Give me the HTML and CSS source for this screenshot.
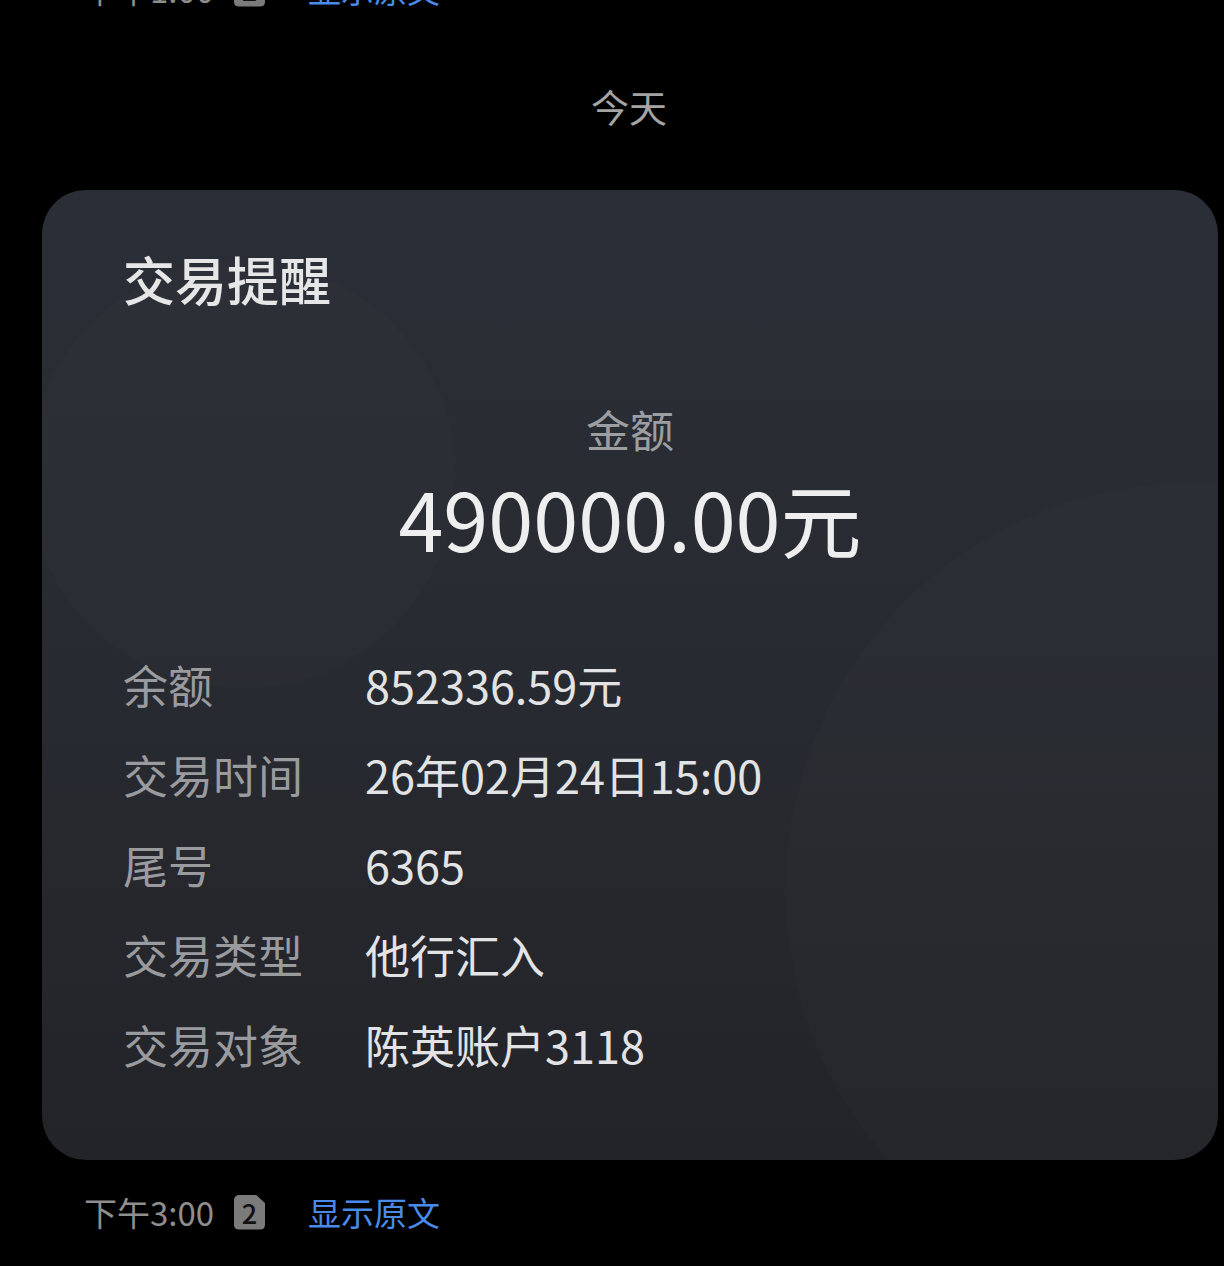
FILE: index.html
```html
<!DOCTYPE html>
<html lang="zh-CN">
<head>
  <meta charset="UTF-8">
  <title>交易提醒</title>
  <link rel="stylesheet" href="styles.css">
</head>
<body>

  <div class="meta meta-top">
    <span class="meta-time">下午1:00</span>
    <span class="sim">2</span>
    <span class="meta-link">显示原文</span>
  </div>

  <div class="day">今天</div>

  <div class="card">
    <div class="card-title">交易提醒</div>

    <div class="amount-label">金额</div>
    <div class="amount">490000.00元</div>

    <div class="rows">
      <div class="row-label">余额</div>
      <div class="row-value">852336.59元</div>
      <div class="row-label">交易时间</div>
      <div class="row-value">26年02月24日15:00</div>
      <div class="row-label">尾号</div>
      <div class="row-value">6365</div>
      <div class="row-label">交易类型</div>
      <div class="row-value">他行汇入</div>
      <div class="row-label">交易对象</div>
      <div class="row-value">陈英账户3118</div>
    </div>
  </div>

  <div class="meta">
    <span class="meta-time">下午3:00</span>
    <span class="sim">2</span>
    <span class="meta-link">显示原文</span>
  </div>

</body>
</html>
```

FILE: styles.css
```css
html, body {
  margin: 0;
  background: #000;
}

body {
  font-family: "Noto Sans CJK SC", "Noto Sans", sans-serif;
  height: 1266px;
  overflow: hidden;
  padding-top: 1px;
  box-sizing: border-box;
}

.meta {
  display: flex;
  align-items: center;
  height: 40px;
  padding-left: 84px;
  margin-top: 32px;
  font-size: 33px;
}

.meta-top {
  margin-top: -32px;
}

.meta-time {
  color: #8e8e8e;
  width: 150px;
}

.sim {
  width: 31px;
  height: 35px;
  border-radius: 5px;
  background: #7b7b7b;
  color: #111;
  font-size: 27px;
  font-weight: 500;
  line-height: 36px;
  text-align: center;
  clip-path: polygon(0 0, 70% 0, 100% 24%, 100% 100%, 0 100%);
  margin-right: 43px;
}

.meta-link {
  color: #4a8ae8;
}

.day {
  text-align: center;
  color: #a4a4a4;
  font-size: 38px;
  line-height: 50px;
  margin-top: 72px;
  padding-left: 34px;
}

.card {
  margin: 59px 6px 0 42px;
  height: 970px;
  box-sizing: border-box;
  padding: 59px 0 0 81px;
  border-radius: 44px;
  background:
    radial-gradient(circle at 200px 285px, rgba(255, 255, 255, 0.012) 0 212px, transparent 215px),
    radial-gradient(circle at 1150px 700px, rgba(255, 255, 255, 0.01) 0 405px, transparent 408px),
    linear-gradient(180deg, #2a2e36 0%, #282b32 45%, #232428 100%);
}

.card-title {
  color: #e6e6e6;
  font-size: 52px;
  font-weight: 500;
  line-height: 60px;
}

.amount-label {
  margin: 95px 0 0 -81px;
  text-align: center;
  color: #9c9ea2;
  font-size: 44px;
  line-height: 50px;
}

.amount {
  margin: 18px 0 0 -81px;
  text-align: center;
  color: #eeeeee;
  font-size: 81px;
  font-weight: 400;
  line-height: 90px;
}

.rows {
  display: grid;
  grid-template-columns: 242px auto;
  grid-auto-rows: 90px;
  align-items: center;
  margin-top: 77px;
  font-size: 45px;
}

.row-label {
  color: #9a9b9f;
}

.row-value {
  color: #e2e3e5;
}
```
